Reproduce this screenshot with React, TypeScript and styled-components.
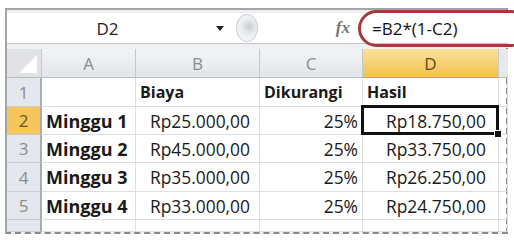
import React from "react";
import styled, { createGlobalStyle, css } from "styled-components";

const GlobalStyle = createGlobalStyle`
  html, body {
    margin: 0;
    padding: 0;
    background: #ffffff;
  }
  body {
    font-family: "Open Sans", "Liberation Sans", sans-serif;
  }
`;

const Page = styled.div`
  width: 514px;
  height: 240px;
  padding: 8px 0 0 5px;
  box-sizing: border-box;
  overflow: hidden;
`;

const Frame = styled.div`
  position: relative;
  width: 503px;
  height: 226px;
  box-sizing: border-box;
  border-top: 2px solid #a3a5a8;
  border-left: 2px solid #a3a5a8;
  border-bottom: 2px dashed #8a8a8a;
  border-right: 2px dashed #8a8a8a;
  background: #eef0f2;
  padding-top: 3px;
`;

const FormulaBar = styled.div`
  display: flex;
  align-items: center;
  height: 30px;
  background: #ffffff;
  border-bottom: 1px solid #c3c6ca;
  margin-right: -2px;
`;

const NameBox = styled.div`
  position: relative;
  width: 223px;
  height: 100%;
  display: flex;
  align-items: center;
  justify-content: center;
  font-size: 17px;
  color: #222;
  padding-right: 22px;
  box-sizing: border-box;
`;

const DropArrow = styled.span`
  position: absolute;
  right: 6px;
  top: 13px;
  width: 0;
  height: 0;
  border-left: 4px solid transparent;
  border-right: 4px solid transparent;
  border-top: 5px solid #222;
`;

const RoundButton = styled.div`
  width: 20px;
  height: 26px;
  margin-left: 6px;
  border-radius: 50%;
  border: 1px solid #cfd2d5;
  background: radial-gradient(circle at 60% 45%, #c9cbce 0%, #eceef0 45%, #fafafa 100%);
`;

const Spacer = styled.div`
  flex: 1;
`;

const FxLabel = styled.span`
  font-family: "Liberation Serif", serif;
  font-style: italic;
  font-weight: bold;
  font-size: 17px;
  color: #777;
  margin-right: 8px;
`;

const FormulaInput = styled.div`
  width: 150px;
  height: 100%;
  display: flex;
  align-items: center;
  padding-left: 14px;
  box-sizing: border-box;
  font-size: 17px;
  color: #111;
`;

const RedRing = styled.div`
  position: absolute;
  left: 351px;
  top: 0px;
  width: 172px;
  height: 37px;
  box-sizing: border-box;
  border: 3px solid #a23a3f;
  border-radius: 19px;
  pointer-events: none;
`;

const Strip = styled.div`
  height: 5px;
`;

const Grid = styled.div`
  display: grid;
  grid-template-columns: 35px 94px 124px 103px 136px 9px;
  grid-template-rows: 29px 29px 28px 28px 29px 28px 12px;
  background: #ffffff;
`;

const HeadCell = styled.div<{ $active?: boolean; $edge?: boolean }>`
  display: flex;
  align-items: center;
  justify-content: center;
  font-size: 17px;
  color: #8a8c8f;
  box-sizing: border-box;
  border-right: 1px solid #c4c7cb;
  border-bottom: 1px solid #b9bcc0;
  background: linear-gradient(#f3f4f6, #e2e5e9);
  ${(p) =>
    p.$active &&
    css`
      background: linear-gradient(#fae29a, #f2c14e);
      color: #5c4a1a;
      border-bottom-color: #d9a73a;
    `}
  ${(p) =>
    p.$edge &&
    css`
      background: #e6e8eb;
      border-right: none;
    `}
`;

const Corner = styled(HeadCell)`
  background: #e0e2e5;
  position: relative;
  &::after {
    content: "";
    position: absolute;
    right: 4px;
    bottom: 4px;
    width: 0;
    height: 0;
    border-left: 18px solid transparent;
    border-bottom: 18px solid #ffffff;
  }
`;

const RowHead = styled(HeadCell)`
  background: #e4e7eb;
  border-right: 2px solid #a9adb2;
  border-bottom: 1px solid #c9ccd0;
  ${(p) =>
    p.$active &&
    css`
      background: #f5c65c;
      color: #6a5522;
    `}
`;

const Cell = styled.div<{
  $bold?: boolean;
  $right?: boolean;
  $pad?: number;
  $size?: number;
  $selected?: boolean;
}>`
  position: relative;
  display: flex;
  align-items: center;
  justify-content: ${(p) => (p.$right ? "flex-end" : "flex-start")};
  padding: 0 ${(p) => (p.$right ? p.$pad ?? 6 : 0)}px 0 ${(p) => (p.$right ? 0 : 4)}px;
  font-size: ${(p) => p.$size ?? 17.4}px;
  font-weight: ${(p) => (p.$bold ? 700 : 400)};
  color: #1a1a1a;
  box-sizing: border-box;
  border-right: 1px solid #dcdee0;
  border-bottom: 1px solid #dcdee0;
  white-space: nowrap;
  ${(p) =>
    p.$selected &&
    css`
      &::after {
        content: "";
        position: absolute;
        inset: -2px -1px -1px -2px;
        border: 3px solid #111;
        pointer-events: none;
      }
      &::before {
        content: "";
        position: absolute;
        right: -4px;
        bottom: -4px;
        width: 6px;
        height: 6px;
        background: #111;
        border: 1px solid #fff;
        z-index: 2;
      }
    `}
`;

interface RowData {
  label: string;
  biaya: string;
  potong: string;
  hasil: string;
}

const rows: RowData[] = [
  { label: "Minggu 1", biaya: "Rp25.000,00", potong: "25%", hasil: "Rp18.750,00" },
  { label: "Minggu 2", biaya: "Rp45.000,00", potong: "25%", hasil: "Rp33.750,00" },
  { label: "Minggu 3", biaya: "Rp35.000,00", potong: "25%", hasil: "Rp26.250,00" },
  { label: "Minggu 4", biaya: "Rp33.000,00", potong: "25%", hasil: "Rp24.750,00" },
];

const App: React.FC = () => {
  return (
    <Page>
      <GlobalStyle />
      <Frame>
        <FormulaBar>
          <NameBox>
            D2
            <DropArrow />
          </NameBox>
          <RoundButton />
          <Spacer />
          <FxLabel>fx</FxLabel>
          <FormulaInput>=B2*(1-C2)</FormulaInput>
        </FormulaBar>
        <RedRing />
        <Strip />
        <Grid>
          <Corner />
          <HeadCell>A</HeadCell>
          <HeadCell>B</HeadCell>
          <HeadCell>C</HeadCell>
          <HeadCell $active>D</HeadCell>
          <HeadCell $edge />

          <RowHead>1</RowHead>
          <Cell />
          <Cell $bold $size={16}>Biaya</Cell>
          <Cell $bold $size={16}>Dikurangi</Cell>
          <Cell $bold $size={16}>Hasil</Cell>
          <Cell />

          {rows.map((r, i) => (
            <React.Fragment key={r.label}>
              <RowHead $active={i === 0}>{i + 2}</RowHead>
              <Cell $bold $size={18}>{r.label}</Cell>
              <Cell $right $pad={9}>{r.biaya}</Cell>
              <Cell $right $pad={4}>{r.potong}</Cell>
              <Cell $right $pad={12} $selected={i === 0}>{r.hasil}</Cell>
              <Cell />
            </React.Fragment>
          ))}

          <RowHead />
          <Cell />
          <Cell />
          <Cell />
          <Cell />
          <Cell />
        </Grid>
      </Frame>
    </Page>
  );
};

export default App;
